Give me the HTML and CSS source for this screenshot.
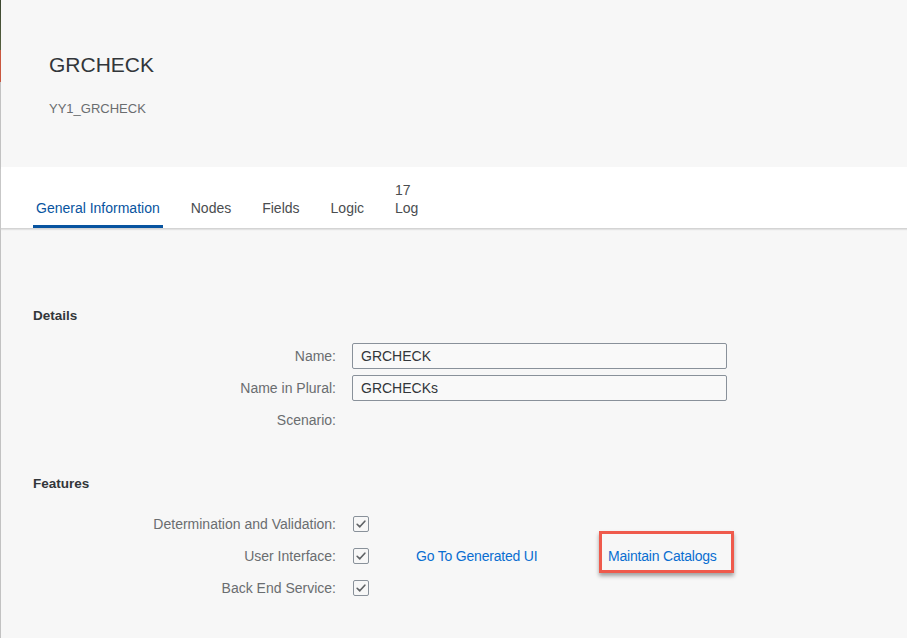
FILE: index.html
```html
<!DOCTYPE html>
<html lang="en">
<head>
<meta charset="utf-8">
<title>GRCHECK</title>
<link rel="stylesheet" href="styles.css">
</head>
<body>
<div class="app">
  <div class="edge"></div>
  <main class="page">
    <header class="obj-header">
      <h1 class="title">GRCHECK</h1>
      <div class="subtitle">YY1_GRCHECK</div>
    </header>
    <nav class="tabs">
      <div class="tab active"><span>General Information</span></div>
      <div class="tab"><span>Nodes</span></div>
      <div class="tab"><span>Fields</span></div>
      <div class="tab"><span>Logic</span></div>
      <div class="tab"><span>17</span><span>Log</span></div>
    </nav>
    <section class="content">
      <h2 class="section-title">Details</h2>
      <div class="form">
        <div class="row">
          <span class="lbl">Name:</span>
          <div class="input">GRCHECK</div>
        </div>
        <div class="row">
          <span class="lbl">Name in Plural:</span>
          <div class="input">GRCHECKs</div>
        </div>
        <div class="row">
          <span class="lbl">Scenario:</span>
        </div>
      </div>
      <h2 class="section-title features">Features</h2>
      <div class="form">
        <div class="row">
          <span class="lbl">Determination and Validation:</span>
          <span class="checkbox"><svg viewBox="0 0 16 16" width="16" height="16"><path d="M3.6 8.3 L6.6 11.2 L12.4 4.8" fill="none" stroke="#5f6265" stroke-width="1.9" stroke-linecap="round" stroke-linejoin="round"/></svg></span>
        </div>
        <div class="row">
          <span class="lbl">User Interface:</span>
          <span class="checkbox"><svg viewBox="0 0 16 16" width="16" height="16"><path d="M3.6 8.3 L6.6 11.2 L12.4 4.8" fill="none" stroke="#5f6265" stroke-width="1.9" stroke-linecap="round" stroke-linejoin="round"/></svg></span>
          <a class="link first" href="#">Go To Generated UI</a>
          <span class="marked"><a class="link" href="#">Maintain Catalogs</a><span class="highlight"></span></span>
        </div>
        <div class="row">
          <span class="lbl">Back End Service:</span>
          <span class="checkbox"><svg viewBox="0 0 16 16" width="16" height="16"><path d="M3.6 8.3 L6.6 11.2 L12.4 4.8" fill="none" stroke="#5f6265" stroke-width="1.9" stroke-linecap="round" stroke-linejoin="round"/></svg></span>
        </div>
      </div>
    </section>
  </main>
</div>
</body>
</html>
```
FILE: styles.css
```css
* { box-sizing: border-box; }
html, body { margin: 0; padding: 0; }
body {
  font-family: "Liberation Sans", Arial, sans-serif;
  background: #f7f7f7;
  color: #32363a;
  overflow: hidden;
}
.app {
  display: flex;
  min-height: 638px;
}
.edge {
  width: 1px;
  flex: 0 0 1px;
  background: linear-gradient(to bottom, #3b4630 0, #56603f 50px, #c9573f 50px, #c9573f 82px, #c2c2c2 82px, #c2c2c2 100%);
}
.page {
  flex: 1;
  background: #f7f7f7;
}
.obj-header {
  padding: 53px 0 50px 48px;
  height: 167px;
}
.title {
  margin: 0;
  font-size: 21px;
  line-height: 24px;
  font-weight: normal;
  color: #32363a;
}
.subtitle {
  margin-top: 24px;
  font-size: 13px;
  line-height: 16px;
  color: #6a6d70;
}
.tabs {
  position: relative;
  height: 61px;
  background: #ffffff;
  display: flex;
  align-items: flex-end;
  gap: 25px;
  padding-left: 32px;
  box-shadow: 0 1px 0 #d4d4d4, 0 2px 1px #e2e2e2;
}
.tab {
  display: flex;
  flex-direction: column;
  padding: 0 3px 8px;
  border-bottom: 3px solid transparent;
  font-size: 14px;
  line-height: 18px;
  color: #4a4d50;
}
.tab.active {
  border-bottom-color: #0854a0;
  color: #0854a0;
}
.content {
  padding: 80px 0 0 32px;
}
.section-title {
  margin: 0 0 16px;
  font-size: 13.5px;
  line-height: 16px;
  font-weight: bold;
  color: #32363a;
}
.section-title.features {
  margin-top: 40px;
}
.row {
  height: 32px;
  display: flex;
  align-items: center;
}
.lbl {
  width: 303px;
  text-align: right;
  font-size: 14px;
  line-height: 18px;
  color: #6a6d70;
}
.input {
  margin-left: 16px;
  width: 375px;
  height: 26px;
  border: 1px solid #89919a;
  border-radius: 2px;
  padding: 3px 8px;
  font-size: 14px;
  line-height: 18px;
  color: #32363a;
  background: #f9f9f9;
}
.checkbox {
  margin-left: 17px;
  width: 16px;
  height: 16px;
  border: 1px solid #89919a;
  border-radius: 2px;
  display: flex;
  align-items: center;
  justify-content: center;
}
.checkbox svg {
  width: 14px;
  height: 14px;
}
.link {
  font-size: 14px;
  line-height: 18px;
  color: #0a6ed1;
  text-decoration: none;
  letter-spacing: -0.2px;
}
.link.first {
  margin-left: 47px;
  width: 192px;
}
.marked {
  position: relative;
  display: inline-block;
  line-height: 18px;
}
.highlight {
  position: absolute;
  left: -9px;
  top: -16px;
  width: 135px;
  height: 42px;
  border: 3px solid #ef5a4c;
  box-shadow: 0 3px 4px rgba(0, 0, 0, 0.35);
  pointer-events: none;
}
```
